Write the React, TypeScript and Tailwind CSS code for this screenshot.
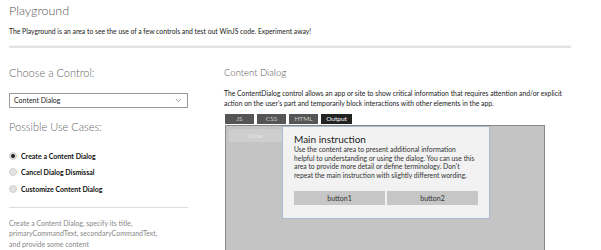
import { ChevronDown } from 'lucide-react';

const useCases = [
  { label: 'Create a Content Dialog', checked: true },
  { label: 'Cancel Dialog Dismissal', checked: false },
  { label: 'Customize Content Dialog', checked: false },
];

const tabs = ['JS', 'CSS', 'HTML', 'Output'];

export default function App() {
  return (
    <div
      className="w-[601px] h-[250px] overflow-hidden bg-white text-[#333]"
      style={{ fontFamily: 'Lato, "Open Sans", sans-serif' }}
    >
      <div className="pl-[9px] pr-[30px] pt-[2px]">
        {/* header */}
        <h1 className="text-[12.5px] font-light text-[#555] leading-[18px]">Playground</h1>
        <p className="mt-[6px] text-[6.8px] leading-[10px] text-[#222]">
          The Playground is an area to see the use of a few controls and test out WinJS code. Experiment away!
        </p>
        <div className="mt-[10px] h-[2px] bg-[#e3e3e3] shadow-[0_-1px_1px_#f4f4f4]" />

        <div className="flex mt-[18px]">
          {/* left column */}
          <div className="w-[179px] shrink-0">
            <h2 className="text-[11px] font-light text-[#666] leading-[14px]">Choose a Control:</h2>
            <div className="mt-[13px] h-[15px] border border-[#999] flex items-center justify-between pl-[4px] pr-[4px]">
              <span className="text-[7px] text-[#222]">Content Dialog</span>
              <ChevronDown className="w-[9px] h-[9px] text-[#555]" strokeWidth={1.5} />
            </div>
            <h2 className="mt-[12px] text-[11px] font-light text-[#666] leading-[14px]">Possible Use Cases:</h2>
            <div className="mt-[17px] flex flex-col gap-[7px]">
              {useCases.map((u) => (
                <div key={u.label} className="flex items-center gap-[4px] h-[9.5px]">
                  <span className="w-[8px] h-[8px] rounded-full bg-[#e2e2e2] border border-[#d0d0d0] flex items-center justify-center">
                    {u.checked && <span className="w-[4px] h-[4px] rounded-full bg-[#222]" />}
                  </span>
                  <span className="text-[7px] font-bold text-[#111]">{u.label}</span>
                </div>
              ))}
            </div>
            <div className="mt-[13px] h-[1px] bg-[#ddd]" />
            <p className="mt-[10px] text-[7px] leading-[10.5px] text-[#888]">
              Create a Content Dialog, specify its title,
              <br />
              primaryCommandText, secondaryCommandText,
              <br />
              and provide some content
            </p>
          </div>

          {/* right column */}
          <div className="ml-[36px] flex-1">
            <h2 className="text-[9.5px] font-light text-[#555] leading-[14px]">Content Dialog</h2>
            <p className="mt-[8px] text-[6.8px] leading-[10px] text-[#222] whitespace-nowrap">
              The ContentDialog control allows an app or site to show critical information that requires attention and/or explicit
              <br />
              action on the user's part and temporarily block interactions with other elements in the app.
            </p>
            <div className="mt-[6px] ml-[1px] flex gap-[3px]">
              {tabs.map((t) => (
                <div
                  key={t}
                  className={
                    'h-[10px] flex items-center justify-center text-[6.5px] leading-none ' +
                    (t === 'Output' ? 'w-[31px] bg-[#222] text-white' : 'w-[29px] bg-[#555] text-[#ccc]')
                  }
                >
                  {t}
                </div>
              ))}
            </div>
            {/* output frame */}
            <div className="relative ml-[1px] mt-[1px] w-[320px] h-[140px] bg-[#c4c4c4] border border-[#888]">
              <div className="mt-[3px] ml-[3px] w-[53px] h-[13px] bg-[#cecece] flex items-center justify-center text-[6px] text-[#e4e4e4]">
                Show
              </div>
              <div className="absolute left-[56px] top-0 w-[208px] h-[93px] bg-[#f2f2f2] border border-[#a9bccf] px-[11px] pt-[6px]">
                <div className="text-[10px] leading-[12px] text-[#222]">Main instruction</div>
                <p className="text-[6.8px] leading-[8.7px] text-[#333] whitespace-nowrap">
                  Use the content area to present additional information
                  <br />
                  helpful to understanding or using the dialog. You can use this
                  <br />
                  area to provide more detail or define terminology. Don't
                  <br />
                  repeat the main instruction with slightly different wording.
                </p>
                <div className="mt-[11px] flex gap-[2px]">
                  <div className="flex-1 h-[14px] bg-[#c6c6c6] flex items-center justify-center text-[7px] text-[#333]">button1</div>
                  <div className="flex-1 h-[14px] bg-[#c6c6c6] flex items-center justify-center text-[7px] text-[#333]">button2</div>
                </div>
              </div>
            </div>
          </div>
        </div>
      </div>
    </div>
  );
}
